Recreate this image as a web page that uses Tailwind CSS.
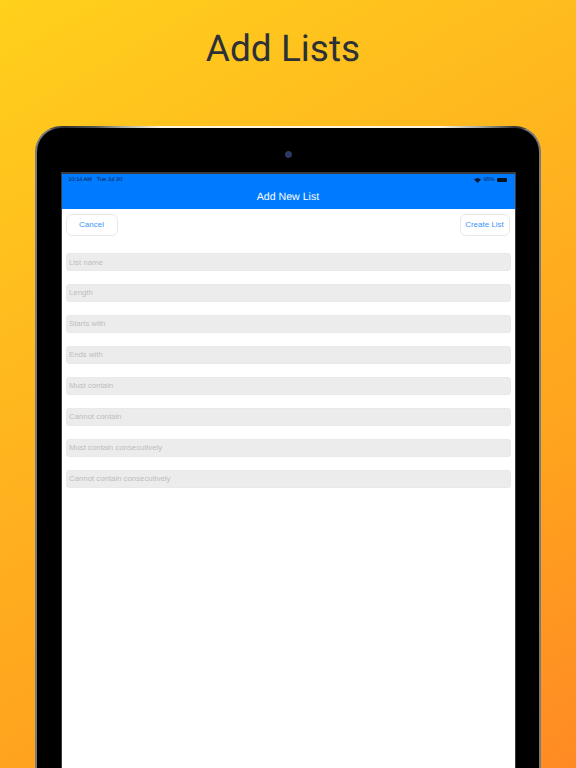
<!DOCTYPE html>
<html lang="en">

<head>
  <meta charset="UTF-8">
  <title>Add Lists</title>
  <script src="https://cdn.jsdelivr.net/npm/@tailwindcss/browser@4"></script>
</head>

<body class="w-[576px] h-[768px] overflow-hidden bg-[linear-gradient(150deg,#ffd01c_0%,#ffb21f_45%,#ffa31e_70%,#ff8a24_100%)] font-['Liberation_Sans',sans-serif] [text-rendering:geometricPrecision]">

  <!-- Title -->
  <h1 class="h-[126px] pt-[28px] pr-[10px] text-center font-['Roboto',sans-serif] text-[37px] leading-[44px] text-[#2c3138]">Add Lists</h1>

  <!-- Device -->
  <div class="ml-[35px] w-[506px] h-[642px] rounded-t-[26px] bg-no-repeat bg-[linear-gradient(90deg,#777_0%,#333_6%,#555_12%,#a8a8a0_17%,#fff6de_25%,#fff6de_80%,#a8a8a0_88%,#333_95%,#777_100%),linear-gradient(#7a7a7a,#7a7a7a)] bg-[size:100%_3px,100%_100%] pt-[2px] px-[2px]">
    <div class="h-full rounded-t-[24px] bg-black px-[23.5px] pt-[22.5px]">

      <!-- Camera -->
      <div class="flex justify-center mb-[14.5px]">
        <div class="size-[7px] rounded-full bg-[#23367a] border border-[#444]"></div>
      </div>

      <!-- Screen -->
      <div class="h-[600px] border-x border-t-2 border-[#3a3a3a] bg-white">
        <div class="h-[35px] bg-[#007aff]">
          <div class="flex items-center justify-between h-[12px] pl-[7px] pr-[7px] text-[5.5px] text-[#10203a]">
            <div class="flex gap-[5px]"><span>10:14 AM</span><span>Tue Jul 30</span></div>
            <div class="flex items-center gap-[2px]">
              <svg class="w-[7px] h-[5px]" viewBox="0 0 14 10" fill="#0a1a33">
                <path d="M7 10 0 3q7-6 14 0z" />
              </svg>
              <span>95%</span>
              <div class="w-[10px] h-[4px] rounded-[1px] bg-[#0a1220] mr-[1px]"></div>
            </div>
          </div>
          <div class="text-center text-white text-[10.6px] leading-[13px] mt-[5px]">Add New List</div>
        </div>

        <!-- Buttons -->
        <div class="flex justify-between pl-[4px] pr-[5px] pt-[5px]">
          <button class="w-[52px] h-[22px] rounded-[6px] border border-[#e8e8e8] bg-white text-[8px] text-[#3d96fb]">Cancel</button>
          <button class="w-[50px] h-[22px] rounded-[6px] border border-[#e8e8e8] bg-white text-[8px] text-[#3d96fb]">Create List</button>
        </div>

        <!-- Fields -->
        <div class="flex flex-col gap-[12.95px] pt-[17px] pl-[4px] pr-[4px]">
          <input class="h-[18px] w-full rounded-[3px] border border-[#e9e9e9] bg-[#ececec] px-[2.5px] text-[7.8px] placeholder:text-[#bdbdbd]" placeholder="List name">
          <input class="h-[18px] w-full rounded-[3px] border border-[#e9e9e9] bg-[#ececec] px-[2.5px] text-[7.8px] placeholder:text-[#bdbdbd]" placeholder="Length">
          <input class="h-[18px] w-full rounded-[3px] border border-[#e9e9e9] bg-[#ececec] px-[2.5px] text-[7.8px] placeholder:text-[#bdbdbd]" placeholder="Starts with">
          <input class="h-[18px] w-full rounded-[3px] border border-[#e9e9e9] bg-[#ececec] px-[2.5px] text-[7.8px] placeholder:text-[#bdbdbd]" placeholder="Ends with">
          <input class="h-[18px] w-full rounded-[3px] border border-[#e9e9e9] bg-[#ececec] px-[2.5px] text-[7.8px] placeholder:text-[#bdbdbd]" placeholder="Must contain">
          <input class="h-[18px] w-full rounded-[3px] border border-[#e9e9e9] bg-[#ececec] px-[2.5px] text-[7.8px] placeholder:text-[#bdbdbd]" placeholder="Cannot contain">
          <input class="h-[18px] w-full rounded-[3px] border border-[#e9e9e9] bg-[#ececec] px-[2.5px] text-[7.8px] placeholder:text-[#bdbdbd]" placeholder="Must contain consecutively">
          <input class="h-[18px] w-full rounded-[3px] border border-[#e9e9e9] bg-[#ececec] px-[2.5px] text-[7.8px] placeholder:text-[#bdbdbd]" placeholder="Cannot contain consecutively">
        </div>
      </div>
    </div>
  </div>

</body>

</html>
